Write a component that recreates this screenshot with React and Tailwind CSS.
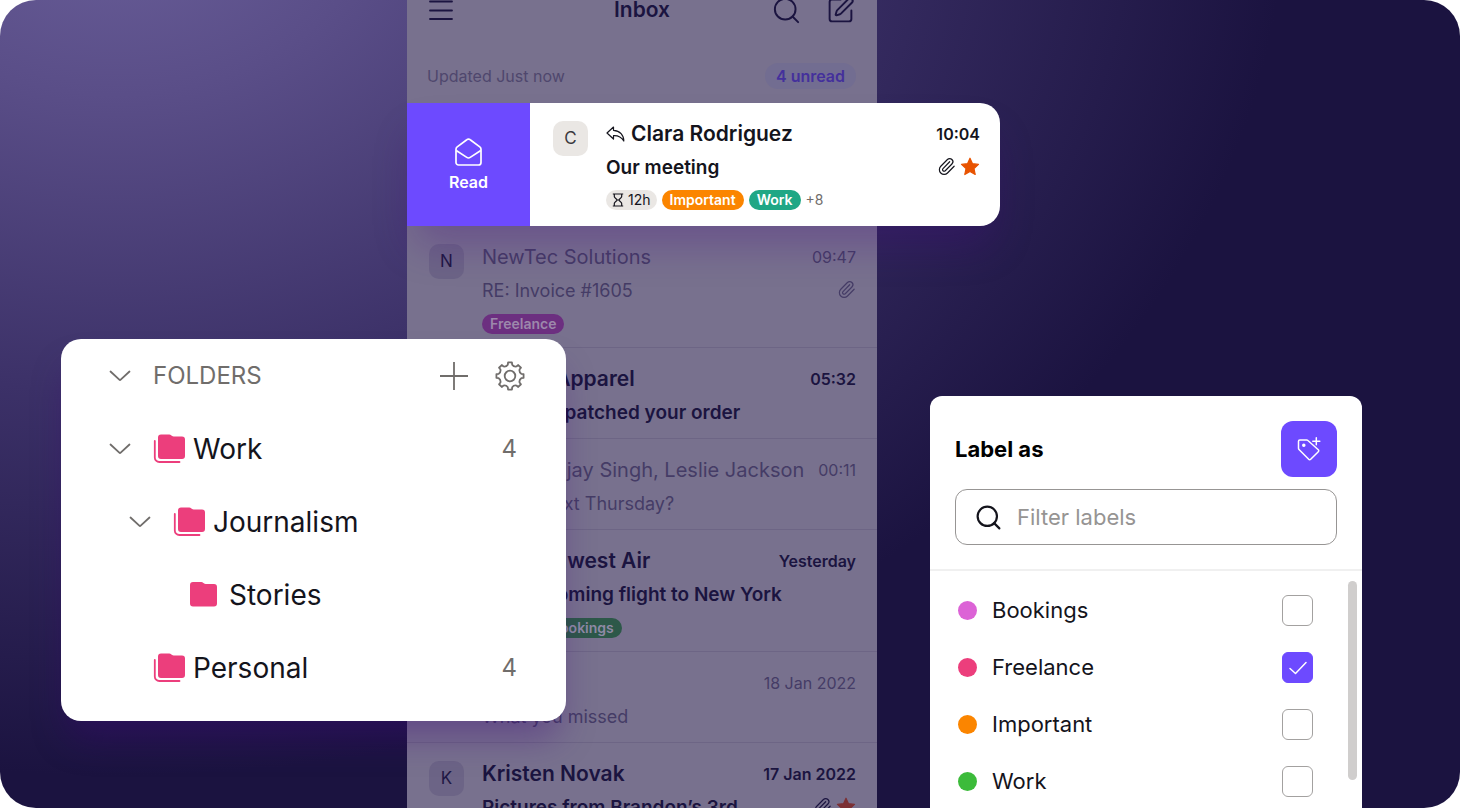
import React, { useState } from 'react';
import { Paperclip, Search, SquarePen } from 'lucide-react';

const BOOKINGS_TAG = 'bg-[#2d5849] text-[#8f8aa6]';

const MESSAGES = [
    {
        initial: 'N',
        sender: 'NewTec Solutions',
        subject: 'RE: Invoice #1605',
        time: '09:47',
        clip: true,
        tags: [{ name: 'Freelance', style: 'bg-[#6c2f80] text-[#9c88ab]' }],
    },
    { initial: 'C', sender: 'Cotton Apparel', subject: 'Team dispatched your order', time: '05:32', unread: true },
    { initial: 'D', sender: 'Dan, Sanjay Singh, Leslie Jackson', subject: 'Dinner next Thursday?', time: '00:11' },
    {
        initial: 'A',
        sender: 'Americawest Air',
        subject: 'The upcoming flight to New York',
        time: 'Yesterday',
        unread: true,
        tags: [
            { name: 'Home', style: BOOKINGS_TAG },
            { name: 'Bookings', style: BOOKINGS_TAG },
        ],
    },
    { initial: 'D', sender: 'Digest', subject: 'What you missed', time: '18 Jan 2022' },
    {
        initial: 'K',
        sender: 'Kristen Novak',
        subject: 'Pictures from Brandon’s 3rd',
        time: '17 Jan 2022',
        unread: true,
        clip: true,
        star: true,
    },
];

const FOLDERS = [
    { name: 'Work', count: 4, indent: 'pl-12', open: true, nested: true },
    { name: 'Journalism', indent: 'pl-[68px]', open: true, nested: true },
    { name: 'Stories', indent: 'pl-[84px]' },
    { name: 'Personal', count: 4, indent: 'pl-12', nested: true },
];

const LABELS = [
    { name: 'Bookings', dot: 'bg-[#dc63d6]' },
    { name: 'Freelance', dot: 'bg-[#ec3e7c]' },
    { name: 'Important', dot: 'bg-[#fb8500]' },
    { name: 'Work', dot: 'bg-[#3cbb3a]' },
];

const MenuIcon = () => (
    <svg width="24" height="20" viewBox="0 0 24 20" fill="none" stroke="currentColor" strokeWidth="1.8" strokeLinecap="round">
        <path d="M1 1.5h22M1 10.5h22M1 19h22" />
    </svg>
);

const EnvelopeOpenIcon = () => (
    <svg width="27" height="28" viewBox="0 0 27 28" fill="none" stroke="currentColor" strokeWidth="1.7" strokeLinejoin="round">
        <path d="M1 11.2c0-1 .4-1.7 1.2-2.3L11.8 1.7c1-.8 2.4-.8 3.400 0l9.600 7.200c.8.6 1.200 1.300 1.200 2.300V24.500a2.500 2.500 0 0 1-2.500 2.500h-20A2.500 2.500 0 0 1 1 24.500z" />
        <path d="M1.200 12.500l10.600 6.900c1 .7 2.400.7 3.400 0l10.600-6.900" />
    </svg>
);

const ReplyIcon = () => (
    <svg width="19" height="16" viewBox="0 0 19 16" fill="none" stroke="currentColor" strokeWidth="1.2" strokeLinejoin="round">
        <path d="M7.5 1L1 7l6.5 6V9.700c4.500-.3 7.700 1.200 10.300 5.300C17.800 9 14 4.700 7.500 4.300z" />
    </svg>
);

const HourglassIcon = () => (
    <svg width="12" height="14" viewBox="0 0 12 14" fill="none" stroke="currentColor" strokeWidth="1.2" strokeLinejoin="round">
        <path d="M.8 1h10.400M.8 13h10.400M2.300 1v2.200c0 .6.2 1 .6 1.400L5.300 7 2.900 9.400c-.4.4-.6.800-.6 1.400V13M9.700 1v2.200c0 .6-.2 1-.6 1.400L6.700 7l2.400 2.400c.4.4.6.800.6 1.400V13" />
    </svg>
);

const StarIcon = ({ className }) => (
    <svg className={className} width="20" height="19" viewBox="0 0 20 19" fill="currentColor" stroke="currentColor" strokeWidth="1.2" strokeLinejoin="round">
        <path d="M10 1.2l2.500 5.500 6 .7-4.500 4.100 1.200 6L10 14.500l-5.200 3 1.200-6L1.500 7.400l6-.7z" />
    </svg>
);

const ChevronIcon = () => (
    <svg width="22" height="12" viewBox="0 0 22 12" fill="none" stroke="currentColor" strokeWidth="1.8" strokeLinecap="round" strokeLinejoin="round">
        <path d="M1.5 1.5l8.800 8.200c.4.4 1 .4 1.400 0l8.800-8.200" />
    </svg>
);

const PlusIcon = () => (
    <svg width="28" height="28" viewBox="0 0 28 28" stroke="currentColor" strokeWidth="1.8">
        <path d="M0 14h28M14 0v28" />
    </svg>
);

const polar = (r, deg) => {
    const a = (deg * Math.PI) / 180;
    return `${(15 + r * Math.cos(a)).toFixed(2)} ${(15 + r * Math.sin(a)).toFixed(2)}`;
};

// eight teeth, each one joined to the next by a scooped valley
const GEAR = [0, 45, 90, 135, 180, 225, 270, 315]
    .map((a, i) => `${i ? 'L' : 'M'}${polar(11.5, a - 11)} L${polar(13.7, a - 8)} L${polar(13.7, a + 8)} L${polar(11.5, a + 11)} Q${polar(9.8, a + 22.5)} ${polar(11.5, a + 34)}`)
    .join(' ');

const GearIcon = () => (
    <svg width="30" height="30" viewBox="0 0 30 30" fill="none" stroke="currentColor" strokeWidth="1.8" strokeLinejoin="round">
        <path d={`${GEAR}z`} />
        <circle cx="15" cy="15" r="5.3" />
    </svg>
);

const FolderIcon = ({ stacked }) => (
    <svg className="shrink-0 text-[#ec3e7c]" width="32" height="30" viewBox="0 0 32 30" fill="none">
        <path
            transform={stacked ? 'translate(1.5 0.5)' : 'translate(-2.5 2)'}
            fill="currentColor"
            d="M6.5 0h8.200c.9 0 1.500.3 2.200.9l.4.3c.6.500 1.100.8 1.900.8h8.300a3 3 0 0 1 3 3v16.500a3 3 0 0 1-3 3h-21a3 3 0 0 1-3-3V3a3 3 0 0 1 3-3z"
        />
        {stacked && <path d="M1.800 7v16.500a4.500 4.500 0 0 0 4.500 4.500H26.500" stroke="currentColor" strokeWidth="1.8" strokeLinecap="round" />}
    </svg>
);

const TagPlusIcon = () => (
    <svg width="24" height="24" viewBox="0 0 24 24" fill="none" stroke="currentColor" strokeWidth="1.5" strokeLinecap="round" strokeLinejoin="round">
        <path d="M2.8 3h6.900c.5 0 .9.2 1.200.5l10.400 9.200c.6.6.6 1.500 0 2l-7.600 7.600c-.6.6-1.500.6-2 0L2 12.500c-.3-.3-.5-.7-.5-1.200V4.300C1.500 3.600 2.100 3 2.800 3z" />
        <path d="M19.300.8v7M15.800 4.300h7" />
        <circle cx="6.800" cy="8.300" r="1" fill="currentColor" />
    </svg>
);

const Tag = ({ className, children }) => (
    <span className={`h-5 px-2 rounded-full flex items-center text-sm font-semibold ${className}`}>{children}</span>
);

const MessageRow = ({ message }) => {
    const { initial, sender, subject, time, unread, clip, star, tags } = message;

    return (
        <li className="flex gap-[18px] pt-[17px] pb-[11px] pl-[22px] pr-[21px] border-b border-[#6d6585]">
            <div className="w-[35px] h-[35px] mt-px shrink-0 rounded-[10px] bg-[#6c6486] text-[#1f1844] text-[17px] flex items-center justify-center">
                {initial}
            </div>
            <div className={`flex-1 min-w-0 ${unread ? 'text-[#1b1440] font-semibold' : 'text-[#453c66]'}`}>
                <div className="flex items-center justify-between h-7 whitespace-nowrap">
                    <span className={unread ? 'text-[21px]' : 'text-xl'}>{sender}</span>
                    <span className="text-base">{time}</span>
                </div>
                <div className="flex items-center justify-between h-7 mt-1.5 whitespace-nowrap">
                    <span className={unread ? 'text-[19px]' : 'text-lg'}>{subject}</span>
                    <span className="flex items-center gap-1 pb-1">
                        {clip && <Paperclip size={19} strokeWidth={1.5} />}
                        {star && <StarIcon className="text-[#7c3034]" />}
                    </span>
                </div>
                {tags && (
                    <div className="flex gap-[5px] mt-[9px] mb-0.5">
                        {tags.map(({ name, style }) => (
                            <Tag key={name} className={style}>{name}</Tag>
                        ))}
                    </div>
                )}
            </div>
        </li>
    );
};

const SwipedMessage = () => (
    <div className="relative z-10 w-[593px] flex bg-white rounded-r-[20px] shadow-[0_26px_40px_-8px_rgba(70,10,130,0.3)]">
        <button className="w-[123px] shrink-0 bg-[#6d4aff] text-white flex flex-col items-center justify-center gap-1.5">
            <EnvelopeOpenIcon />
            <span className="text-base leading-5 font-semibold">Read</span>
        </button>
        <div className="flex-1 flex gap-[18px] pt-[17px] pb-[13px] pl-[23px] pr-5 text-[#14141c]">
            <div className="w-[35px] h-[35px] mt-px shrink-0 rounded-[10px] bg-[#eae7e4] text-[#3a3940] text-[17px] flex items-center justify-center">
                C
            </div>
            <div className="flex-1">
                <div className="flex items-center h-7 font-semibold">
                    <ReplyIcon />
                    <span className="ml-1.5 text-[21px]">Clara Rodriguez</span>
                    <span className="ml-auto text-base">10:04</span>
                </div>
                <div className="flex items-center h-7 mt-1.5">
                    <span className="text-[19px] font-semibold">Our meeting</span>
                    <span className="ml-auto flex items-center gap-1 pb-1">
                        <Paperclip size={19} strokeWidth={1.5} />
                        <StarIcon className="text-[#e85300]" />
                    </span>
                </div>
                <div className="flex items-center gap-[5px] mt-2 mb-[3px]">
                    <span className="h-5 px-1.5 rounded-full bg-[#eae7e4] flex items-center gap-1 text-sm">
                        <HourglassIcon />
                        12h
                    </span>
                    <Tag className="bg-[#fb8500] text-white">Important</Tag>
                    <Tag className="bg-[#20a785] text-white">Work</Tag>
                    <span className="text-sm text-[#706d6b]">+8</span>
                </div>
            </div>
        </div>
    </div>
);

const Inbox = () => (
    <section className="ml-[407px] w-[470px] shrink-0 bg-[#78718e] text-[#1b1440]">
        <header className="-mt-3.5 h-12 px-[22px] grid grid-cols-3 items-center">
            <button className="justify-self-start" aria-label="Menu">
                <MenuIcon />
            </button>
            <h1 className="text-center text-[21px] font-semibold">Inbox</h1>
            <div className="flex items-center justify-end gap-6">
                <button aria-label="Search">
                    <Search size={31} strokeWidth={1.5} />
                </button>
                <button aria-label="Compose">
                    <SquarePen size={29} strokeWidth={1.6} />
                </button>
            </div>
        </header>

        <div className="h-[69px] pt-3.5 pl-5 pr-[21px] flex items-center justify-between">
            <span className="text-base text-[#4f476d]">Updated Just now</span>
            <span className="h-[26px] px-[11px] rounded-full bg-[#726d91] text-[#44309c] text-base font-semibold flex items-center">4 unread</span>
        </div>

        <SwipedMessage />

        <ul>
            {MESSAGES.map((message) => (
                <MessageRow key={message.sender} message={message} />
            ))}
        </ul>
    </section>
);

const FoldersPanel = () => (
    <nav className="absolute z-20 left-[61px] top-[339px] w-[505px] pb-[17px] bg-white rounded-[20px] shadow-[0_24px_36px_-8px_rgba(60,5,120,0.38)] text-[#706d6b]">
        <div className="h-[73px] pl-12 pr-[41px] flex items-center">
            <button aria-label="Toggle folders">
                <ChevronIcon />
            </button>
            <h2 className="ml-[22px] text-2xl">FOLDERS</h2>
            <button className="ml-auto" aria-label="Add folder">
                <PlusIcon />
            </button>
            <button className="ml-[27px]" aria-label="Folder settings">
                <GearIcon />
            </button>
        </div>
        <ul>
            {FOLDERS.map(({ name, count, indent, open, nested }) => (
                <li key={name} className={`h-[73px] pr-[49px] flex items-center ${indent}`}>
                    <div className="w-11 shrink-0">
                        {open && (
                            <button className="block" aria-label={`Collapse ${name}`}>
                                <ChevronIcon />
                            </button>
                        )}
                    </div>
                    <FolderIcon stacked={nested} />
                    <a href="#" className="ml-2 text-[28px] text-[#14141c]">{name}</a>
                    {count && <span className="ml-auto text-2xl">{count}</span>}
                </li>
            ))}
        </ul>
    </nav>
);

const LabelPanel = () => {
    const [selected, setSelected] = useState(['Freelance']);

    const toggle = (name) =>
        setSelected(selected.includes(name) ? selected.filter((n) => n !== name) : [...selected, name]);

    return (
        <section className="ml-auto mr-[98px] mt-[396px] w-[432px] shrink-0 bg-white rounded-t-xl text-[#14141c]">
            <div className="px-[25px] pt-[25px] pb-6 border-b-2 border-[#f0f0f0]">
                <div className="flex items-center justify-between">
                    <h2 className="text-[22px] font-bold text-black">Label as</h2>
                    <button className="w-14 h-14 rounded-xl bg-[#6d4aff] text-white flex items-center justify-center" aria-label="Create label">
                        <TagPlusIcon />
                    </button>
                </div>
                <label className="mt-3 h-14 px-[18px] rounded-xl border border-[#979594] flex items-center gap-3.5">
                    <Search size={29} strokeWidth={1.8} className="shrink-0" />
                    <input
                        type="text"
                        aria-label="Filter labels"
                        placeholder="Filter labels"
                        className="flex-1 min-w-0 text-[22px] outline-none placeholder:text-[#969493]"
                    />
                </label>
            </div>

            <div className="flex">
                <ul className="flex-1 pt-[11px] pl-7">
                    {LABELS.map(({ name, dot }) => (
                        <li key={name}>
                            <label className="h-[57px] flex items-center">
                                <span className={`w-[19px] h-[19px] rounded-full ${dot}`} />
                                <span className="ml-[15px] text-[22px]">{name}</span>
                                <span className="ml-auto grid place-items-center">
                                    <input
                                        type="checkbox"
                                        checked={selected.includes(name)}
                                        onChange={() => toggle(name)}
                                        className="peer col-start-1 row-start-1 appearance-none w-[31px] h-[31px] rounded-md border border-[#a3a1a0] bg-white checked:bg-[#6d4aff] checked:border-[#6d4aff]"
                                    />
                                    <svg className="col-start-1 row-start-1 pointer-events-none text-white invisible peer-checked:visible" width="18" height="14" viewBox="0 0 18 14" fill="none" stroke="currentColor" strokeWidth="1.5" strokeLinecap="round" strokeLinejoin="round">
                                        <path d="M1 7.5l5.500 5L17 1.500" />
                                    </svg>
                                </span>
                            </label>
                        </li>
                    ))}
                </ul>
                <div className="w-[9px] h-[199px] mt-2.5 ml-[35px] mr-[5px] rounded-full bg-[#d0cecd]" />
            </div>
        </section>
    );
};

export default function App() {
    return (
        <div className="h-screen pb-px bg-white font-['Inter',sans-serif]">
            <main className="relative h-full flex overflow-hidden rounded-[36px] bg-[#1b1340] bg-[radial-gradient(ellipse_80%_108%_at_8%_-12%,#6a5f9a_0%,#5a4e88_22%,#3c3168_56%,#1b1340_100%)]">
                <Inbox />
                <LabelPanel />
                <FoldersPanel />
            </main>
        </div>
    );
}
